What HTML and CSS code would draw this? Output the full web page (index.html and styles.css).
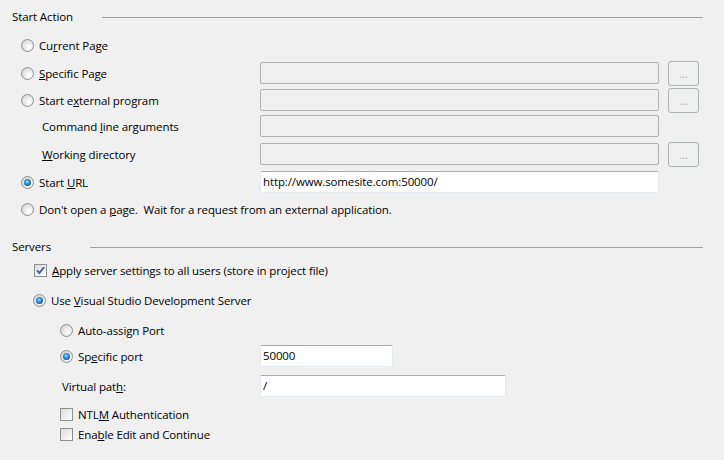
FILE: index.html
```html
<!DOCTYPE html>
<html lang="en">
<head>
  <meta charset="UTF-8">
  <title>Web - Start Options</title>
  <link rel="stylesheet" href="styles.css">
</head>
<body>
  <div class="page">
    <div class="group-header">
      <span class="group-title">Start Action</span>
      <div class="rule rule-start"></div>
    </div>

    <div class="start-grid">
      <label class="option span-all"><span class="radio"></span><span>Cu<u>r</u>rent Page</span></label>

      <label class="option"><span class="radio"></span><span><u>S</u>pecific Page</span></label>
      <div class="textbox disabled"></div>
      <button class="browse" disabled>...</button>

      <label class="option"><span class="radio"></span><span>Start e<u>x</u>ternal program</span></label>
      <div class="textbox disabled"></div>
      <button class="browse" disabled>...</button>

      <label class="option sub-label"><span>Command <u>l</u>ine arguments</span></label>
      <div class="textbox disabled"></div>
      <div></div>

      <label class="option sub-label"><span><u>W</u>orking directory</span></label>
      <div class="textbox disabled"></div>
      <button class="browse" disabled>...</button>

      <label class="option"><span class="radio checked"></span><span>Start <u>U</u>RL</span></label>
      <div class="textbox">http://www.somesite.com:50000/</div>
      <div></div>

      <label class="option span-all"><span class="radio"></span><span>Don't open a <u>p</u>age.&nbsp; Wait for a request from an external application.</span></label>
    </div>

    <div class="group-header servers-header">
      <span class="group-title">Servers</span>
      <div class="rule rule-servers"></div>
    </div>

    <div class="servers-grid">
      <label class="option span-all level-1 check-row">
        <span class="checkbox">
          <svg width="9" height="9" viewBox="0 0 9 9"><path d="M1 4.3L3.4 7L8 1.2" fill="none" stroke="#4A5D8F" stroke-width="1.9"/></svg>
        </span><span><u>A</u>pply server settings to all users (store in project file)</span>
      </label>

      <label class="option span-all level-1"><span class="radio checked"></span><span>Use <u>V</u>isual Studio Development Server</span></label>

      <label class="option span-all level-2"><span class="radio"></span><span>Auto-assi<u>g</u>n Port</span></label>

      <label class="option level-2"><span class="radio checked"></span><span>Sp<u>e</u>cific port</span></label>
      <div class="textbox port-box">50000</div>

      <label class="option level-2 path-label"><span>Virtual pat<u>h</u>:</span></label>
      <div class="textbox path-box">/</div>

      <label class="option span-all level-2 small-row"><span class="checkbox"></span><span>NTL<u>M</u> Authentication</span></label>
      <label class="option span-all level-2 small-row"><span class="checkbox"></span><span>Ena<u>b</u>le Edit and Continue</span></label>
    </div>
  </div>
</body>
</html>
```

FILE: styles.css
```css
:root {
  --window-bg: #F0F0F0;
  --text: #000000;
  --rule: #A0A0A0;
  --box-border: #ABADB3;
  --box-border-light: #E3E9EF;
  --disabled-border: #B2B2B2;
}

body {
  margin: 0;
  padding: 0;
  background-color: var(--window-bg);
  color: var(--text);
  font-family: 'Segoe UI', 'Open Sans', sans-serif;
  font-size: 11.5px;
  letter-spacing: -0.12px;
}

.page {
  width: 691px;
  padding: 9px 0 0 12px;
}

.group-header {
  display: flex;
  align-items: center;
  height: 16px;
  line-height: 16px;
}

.servers-header {
  margin-top: 19px;
}

.rule {
  flex: 1;
  height: 1px;
  background-color: var(--rule);
}

.rule-start {
  margin-left: 29px;
}

.rule-servers {
  margin-left: 39px;
}

.start-grid {
  display: grid;
  grid-template-columns: 248px 399px 40px;
  grid-template-rows: 28px 27px 26px 28px 28px 27px 22px;
  align-items: start;
  margin-top: 9px;
}

.option {
  display: flex;
  align-items: center;
  height: 22px;
  padding-left: 9px;
  white-space: nowrap;
}

.span-all {
  grid-column: 1 / -1;
}

.sub-label {
  padding-left: 30px;
}

.radio {
  position: relative;
  width: 11px;
  height: 11px;
  margin-right: 5px;
  border: 1px solid #8F9091;
  border-radius: 50%;
  background: radial-gradient(circle at 65% 65%, #FFFFFF 0, #EAEAEA 45%, #C8C8C8 100%);
  flex-shrink: 0;
}

.radio.checked::after {
  content: "";
  position: absolute;
  top: 2px;
  left: 2px;
  width: 7px;
  height: 7px;
  border-radius: 50%;
  background: radial-gradient(circle at 45% 40%, #A4E0FF 0, #2C8AD6 40%, #0D3C78 95%);
}

.checkbox {
  display: flex;
  align-items: center;
  justify-content: center;
  width: 11px;
  height: 11px;
  margin-right: 5px;
  border: 1px solid #8E8F8F;
  background: linear-gradient(135deg, #DCDCDC 0, #F4F4F4 70%, #FFFFFF 100%);
  flex-shrink: 0;
}

.textbox {
  box-sizing: border-box;
  height: 22px;
  padding: 0 2px;
  line-height: 20px;
  background-color: #FFFFFF;
  border: 1px solid var(--box-border-light);
  border-top-color: var(--box-border);
  border-radius: 2px;
  white-space: nowrap;
}

.textbox.disabled {
  background-color: var(--window-bg);
  border: 1px solid var(--disabled-border);
}

.browse {
  justify-self: end;
  box-sizing: border-box;
  width: 31px;
  height: 25px;
  margin-top: -1px;
  padding: 0;
  background-color: var(--window-bg);
  border: 1px solid #ADB2B5;
  border-radius: 3px;
  color: #A8A8A8;
  font-family: inherit;
  font-size: 11px;
}

.servers-grid {
  display: grid;
  grid-template-columns: 248px 246px;
  grid-template-rows: 30px 30px 26px 30px 29px 20px 20px;
  align-items: start;
  margin-top: 4px;
}

.level-1 {
  padding-left: 21px;
}

.check-row .checkbox {
  margin-left: 1px;
}

.level-2 {
  padding-left: 48px;
}

.path-label {
  padding-left: 50px;
}

.small-row {
  height: 20px;
}

.port-box {
  width: 133px;
}

.path-box {
  width: 246px;
}
```
